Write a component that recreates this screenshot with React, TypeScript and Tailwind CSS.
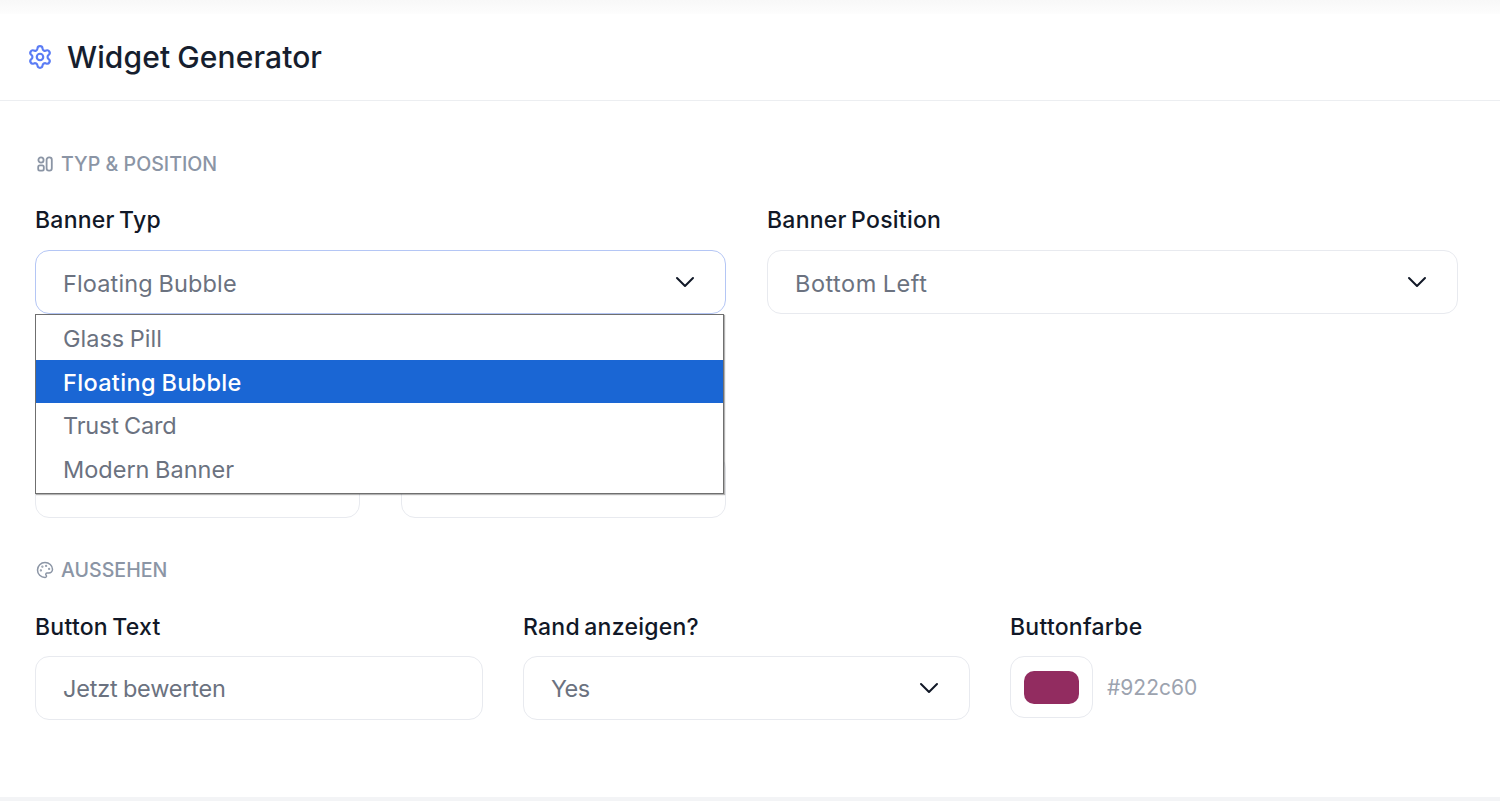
import { Settings, Palette, ChevronDown } from "lucide-react";

const font = "font-['Inter','Liberation_Sans',sans-serif]";

function Label({ children, mb = "mb-[16px]" }: { children: React.ReactNode; mb?: string }) {
  return <div className={`text-[23px] leading-[28px] font-medium text-[#111827] tracking-[0.25px] [word-spacing:-2px] ${mb}`}>{children}</div>;
}

function Field({ text, chevron, focus, textClass = "pt-[4px]" }: { text: string; chevron?: boolean; focus?: boolean; textClass?: string }) {
  return (
    <div className={`h-[64px] rounded-[14px] border bg-white flex items-center justify-between pl-[27px] pr-[24px] text-[23.5px] text-[#6b7280] [word-spacing:-1px] ${focus ? "border-[#b4c6f5]" : "border-[#e8eaef]"}`}>
      <span className={textClass}>{text}</span>
      {chevron && <ChevronDown size={32} strokeWidth={1.5} className="text-[#111827] shrink-0" />}
    </div>
  );
}

function SectionTitle({ icon, children }: { icon: React.ReactNode; children: React.ReactNode }) {
  return (
    <div className="flex items-center gap-[7px] pl-[1px] text-[19.6px] leading-[24px] font-medium text-[#8b95a5]">
      {icon}
      {children}
    </div>
  );
}

function Option({ text, selected, height, textClass = "" }: { text: string; selected?: boolean; height: string; textClass?: string }) {
  return (
    <div className={`${height} flex items-center pl-[27px] pt-[2px] [word-spacing:-1px] ${textClass} ${selected ? "bg-[#1a66d4] text-white font-medium" : ""}`}>
      {text}
    </div>
  );
}

export default function App() {
  return (
    <div className={`w-[1500px] h-[801px] bg-white overflow-hidden flex flex-col ${font}`}>
      <div className="h-[14px] bg-gradient-to-b from-[#f8f8f8] to-[#fdfdfd]" />
      <div className="h-[87px] border-b border-[#eceef1] flex items-center pl-[27px] gap-[14px]">
        <Settings size={26} strokeWidth={2} className="text-[#5b7cf5]" />
        <div className="text-[30px] font-medium text-[#161e2e] tracking-[0.1px] [word-spacing:-1px]">Widget Generator</div>
      </div>
      <div className="flex-1 px-[35px] pt-[51px] relative">
        <SectionTitle
          icon={
            <svg width="18" height="18" viewBox="0 0 18 18" fill="none" stroke="#8b95a5" strokeWidth="1.8">
              <circle cx="5" cy="5" r="2.6" />
              <rect x="2.2" y="10.4" width="5.6" height="5.2" rx="1.6" />
              <rect x="10.6" y="2.4" width="5.2" height="13.2" rx="2.4" />
            </svg>
          }
        >
          TYP &amp; POSITION
        </SectionTitle>
        <div className="grid grid-cols-[691px_691px] gap-x-[41px] mt-[30px]">
          <div className="relative">
            <Label>Banner Typ</Label>
            <Field focus chevron text="Floating Bubble" textClass="pt-[4px] tracking-[0.13px]" />
            <div className="absolute left-0 top-[108px] w-[689px] h-[180px] bg-white border border-[#6f6f6f] shadow-[1px_1px_1px_rgba(0,0,0,0.3)] z-10 text-[23.5px] text-[#6b7280]">
              <Option height="h-[45px]" text="Glass Pill" />
              <Option height="h-[43px]" text="Floating Bubble" selected textClass="tracking-[0.33px]" />
              <Option height="h-[44px]" text="Trust Card" textClass="tracking-[-0.2px]" />
              <Option height="h-[44px]" text="Modern Banner" />
            </div>
          </div>
          <div>
            <Label>Banner Position</Label>
            <Field chevron text="Bottom Left" textClass="pt-[4px] tracking-[0.5px]" />
          </div>
          <div className="mt-[140px] grid grid-cols-2 gap-x-[41px]">
            <div className="h-[64px] rounded-[14px] border border-[#e8eaef]" />
            <div className="h-[64px] rounded-[14px] border border-[#e8eaef]" />
          </div>
        </div>
        <div className="mt-[40px]">
          <SectionTitle icon={<Palette size={18} strokeWidth={2} className="text-[#8b95a5]" />}>AUSSEHEN</SectionTitle>
        </div>
        <div className="grid grid-cols-[448px_447px_1fr] gap-x-[40px] w-[1423px] mt-[31px]">
          <div>
            <Label mb="mb-[15px]">Button Text</Label>
            <Field text="Jetzt bewerten" textClass="pt-[2px] tracking-[-0.2px]" />
          </div>
          <div>
            <Label mb="mb-[15px]">Rand anzeigen?</Label>
            <Field chevron text="Yes" textClass="pt-[2px] tracking-[-0.6px]" />
          </div>
          <div>
            <Label mb="mb-[15px]">Buttonfarbe</Label>
            <div className="flex items-center gap-[14px]">
              <div className="w-[83px] h-[62px] rounded-[14px] border border-[#e8eaef] flex items-center justify-center">
                <div className="w-[55px] h-[33px] rounded-[10px] bg-[#922c60]" />
              </div>
              <span className="text-[21px] text-[#9ca3af] pt-[2px]">#922c60</span>
            </div>
          </div>
        </div>
      </div>
      <div className="h-[4px] bg-[#f3f4f6]" />
    </div>
  );
}
